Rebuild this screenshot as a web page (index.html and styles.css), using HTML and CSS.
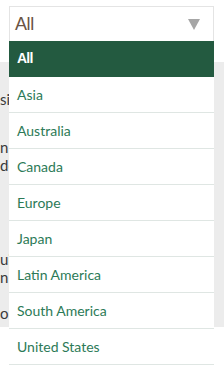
FILE: index.html
```html
<!DOCTYPE html>
<html>
<head>
<meta charset="utf-8">
<link rel="stylesheet" href="styles.css">
</head>
<body>
<div class="filter">
  <div class="select">
    <span class="value">All</span>
    <svg class="caret" width="12" height="11" viewBox="0 0 12 11"><path d="M0 0H12L6 11Z" fill="#a6a6a6"/></svg>
  </div>
  <ul class="menu">
    <li class="active">All</li>
    <li>Asia</li>
    <li>Australia</li>
    <li>Canada</li>
    <li>Europe</li>
    <li>Japan</li>
    <li>Latin America</li>
    <li>South America</li>
    <li>United States</li>
  </ul>
</div>
<div class="panel">
  <p class="line l1">sic</p>
  <p class="line l2">n <span class="accent">&#8226;</span></p>
  <p class="line l3">de</p>
  <p class="line l4">ui</p>
  <p class="line l5">n</p>
  <p class="line l6">or</p>
</div>
</body>
</html>
```
FILE: styles.css
```css
html, body {
  margin: 0;
  padding: 0;
  background: #ffffff;
}
body {
  width: 224px;
  height: 377px;
  overflow: hidden;
  font-family: Lato, "Open Sans", sans-serif;
}
.filter {
  position: relative;
  padding: 6px 10px 0 9px;
}
.select {
  height: 35px;
  box-sizing: border-box;
  border: 1px solid #e4e4e4;
  border-bottom: none;
  display: flex;
  align-items: center;
  justify-content: space-between;
  padding: 0 13px 0 5px;
  background: #fff;
}
.value {
  font-family: "Liberation Sans", Arial, sans-serif;
  font-size: 18px;
  color: #6a5444;
  letter-spacing: -0.4px;
}
.caret {
  display: block;
  margin-top: 1px;
}
.menu {
  position: absolute;
  top: 41px;
  left: 9px;
  width: 205px;
  margin: 0;
  padding: 0;
  list-style: none;
  background: #fff;
  z-index: 2;
}
.menu li {
  height: 36px;
  box-sizing: border-box;
  border-bottom: 1px solid #dfe6e3;
  display: flex;
  align-items: center;
  padding: 0 0 1px 8px;
  font-size: 14px;
  color: #2c7a57;
}
.menu li.active {
  background: #235a40;
  border-bottom-color: #235a40;
  color: #fff;
  font-family: "Liberation Sans", Arial, sans-serif;
  font-weight: bold;
  font-size: 14px;
  letter-spacing: -0.8px;
}
.panel {
  margin-top: 21px;
  height: 265px;
  background: #ececec;
  padding-top: 1px;
  box-sizing: border-box;
  overflow: hidden;
}
.line {
  margin: 0;
  font-size: 15px;
  line-height: 18px;
  color: #3a3a3a;
  white-space: nowrap;
}
.accent {
  color: #d08a3a;
}
.l1 { margin-top: 27px; }
.l2 { margin-top: 30px; }
.l4 { margin-top: 76px; }
.l6 { margin-top: 18px; }
```
